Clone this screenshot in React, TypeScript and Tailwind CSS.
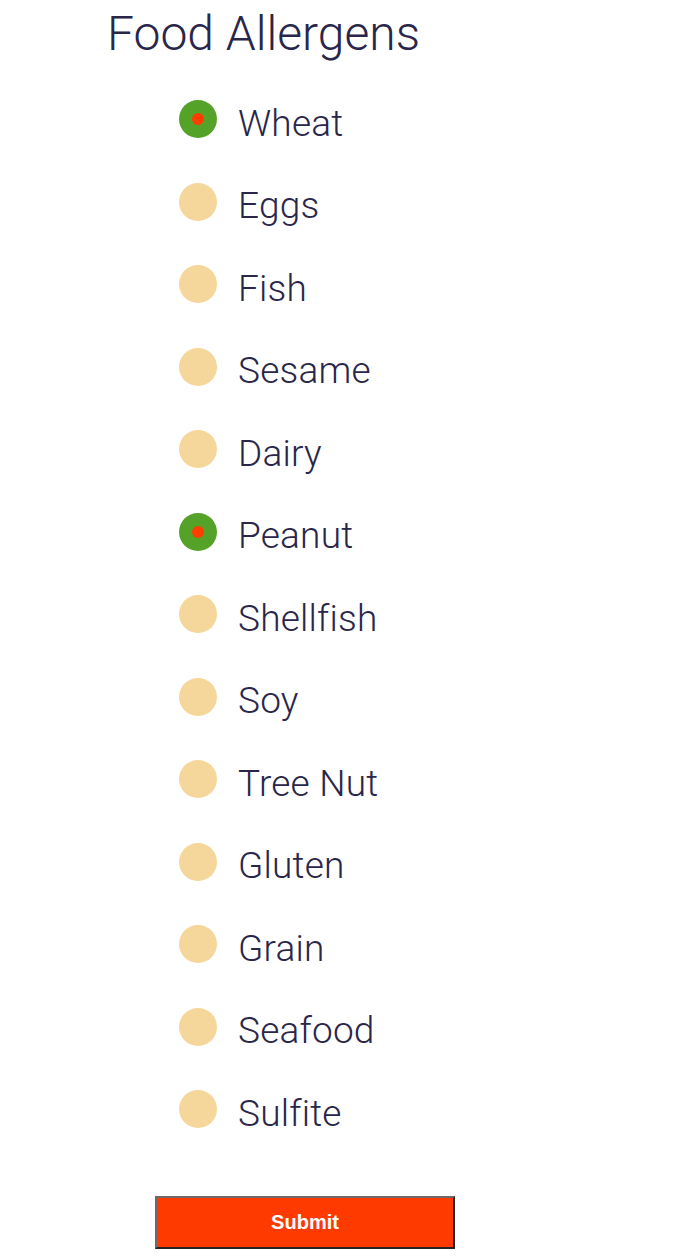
const allergens = [
  { name: "Wheat", checked: true },
  { name: "Eggs", checked: false },
  { name: "Fish", checked: false },
  { name: "Sesame", checked: false },
  { name: "Dairy", checked: false },
  { name: "Peanut", checked: true },
  { name: "Shellfish", checked: false },
  { name: "Soy", checked: false },
  { name: "Tree Nut", checked: false },
  { name: "Gluten", checked: false },
  { name: "Grain", checked: false },
  { name: "Seafood", checked: false },
  { name: "Sulfite", checked: false },
];

const App = () => {
  return (
    <div className="w-[674px] h-[1259px] bg-white font-['Roboto',sans-serif] text-[#29264a]">
      {/* TITLE */}
      <h1 className="pl-[107px] pt-[5px] text-[48px] leading-[58px] font-light">
        Food Allergens
      </h1>
      {/* LIST */}
      <div className="flex flex-col pl-[179px] pt-[15px]">
        {allergens.map((item) => (
          <label
            key={item.name}
            className="flex items-center h-[82.5px] cursor-pointer"
          >
            {item.checked ? (
              <span className="w-[38px] h-[38px] rounded-full bg-[#55a228] flex items-center justify-center">
                <span className="w-[12px] h-[12px] rounded-full bg-[#ff3d00]" />
              </span>
            ) : (
              <span className="w-[38px] h-[38px] rounded-full bg-[#f6d79b]" />
            )}
            <span className="ml-[21px] text-[37px] font-light leading-none mt-[8px] tracking-[0.2px]">
              {item.name}
            </span>
          </label>
        ))}
      </div>
      {/* BUTTON */}
      <div className="pl-[155px] pt-[45px]">
        <button className="w-[300px] h-[53px] bg-[#ff3a00] text-white font-bold text-[20px] font-['Liberation_Sans',sans-serif] border-2 border-solid border-t-[#6e6868] border-l-[#6e6868] border-r-[#262222] border-b-[#262222]">
          Submit
        </button>
      </div>
    </div>
  );
};

export default App;
